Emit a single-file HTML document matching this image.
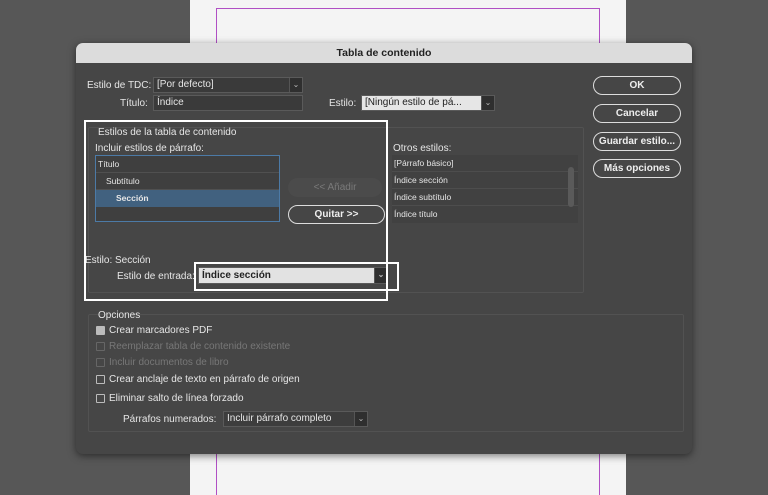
<!DOCTYPE html><html><head><meta charset="utf-8"><style>
*{box-sizing:border-box;margin:0;padding:0}
body{width:768px;height:495px;background:#575757;position:relative;overflow:hidden;font-family:"Liberation Sans",sans-serif;font-size:10px;color:#e6e6e6}
.a{position:absolute}
.page{left:190px;top:0;width:436px;height:495px;background:#f4f4f4}
.dlg{left:76px;top:43px;width:616px;height:411px;background:#464646;border-radius:7px;overflow:hidden;box-shadow:0 2px 8px rgba(0,0,0,.5)}
.tb{left:0;top:0;width:616px;height:20px;background:#dcdcdc;color:#222;font-weight:bold;text-align:center;line-height:20px;font-size:10.5px}
.fld{background:#3a3a3a;border:1px solid #5a5a5a;line-height:14px;height:16px;padding-left:3px}
.dd{background:#2f2f2f;border-left:1px solid #555;width:13px;height:14px;top:0;right:0;color:#bbb;font-size:8px;text-align:center;line-height:14px}
.btn{border:1.5px solid #ddd;border-radius:10px;text-align:center;color:#eee;font-weight:bold;height:19px;line-height:17px}
.grp{border:1px solid #525252;border-radius:2px}
.cb{width:9px;height:9px;border:1px solid #bbb;border-radius:1px}
.wb{border:2px solid #fff}
</style></head><body>
<div class="a page"></div>
<div class="a" style="left:216px;top:8px;width:384px;height:1px;background:#b04fc4"></div>
<div class="a" style="left:216px;top:8px;width:1px;height:40px;background:#b04fc4"></div>
<div class="a" style="left:599px;top:8px;width:1px;height:40px;background:#b04fc4"></div>
<div class="a" style="left:216px;top:450px;width:1px;height:45px;background:#b04fc4"></div>
<div class="a" style="left:599px;top:450px;width:1px;height:45px;background:#b04fc4"></div>
<div class="a dlg">
<div class="a tb">Tabla de contenido</div>
<div class="a" style="left:11px;top:37px">Estilo de TDC:</div>
<div class="a fld" style="left:77px;top:34px;width:150px">[Por defecto]<div class="a dd">⌄</div></div>
<div class="a" style="left:44px;top:55px">Título:</div>
<div class="a fld" style="left:77px;top:52px;width:150px">Índice</div>
<div class="a" style="left:253px;top:55px">Estilo:</div>
<div class="a fld" style="left:285px;top:52px;width:134px;background:#e6e6e6;color:#222">[Ningún estilo de pá...<div class="a dd">⌄</div></div>
<div class="a grp" style="left:12px;top:84px;width:496px;height:166px"></div>
<div class="a" style="left:22px;top:84px">Estilos de la tabla de contenido</div>
<div class="a" style="left:19px;top:100px">Incluir estilos de párrafo:</div>
<div class="a" style="left:19px;top:112px;width:185px;height:67px;border:1px solid #4c7aa6;background:#3f3f3f;font-size:8.5px">
<div style="height:17px;line-height:16px;padding-left:2px;border-bottom:1px solid #505050">Título</div>
<div style="height:17px;line-height:16px;padding-left:10px;border-bottom:1px solid #505050">Subtítulo</div>
<div style="height:17px;line-height:16px;padding-left:20px;background:#41617f;font-weight:bold">Sección</div></div>
<div class="a" style="left:212px;top:135px;width:94px;height:19px;background:#4b4b4b;border-radius:10px;color:#7a7a7a;text-align:center;line-height:19px">&lt;&lt; Añadir</div>
<div class="a btn" style="left:212px;top:162px;width:97px">Quitar &gt;&gt;</div>
<div class="a" style="left:317px;top:100px">Otros estilos:</div>
<div class="a" style="left:316px;top:112px;width:186px;height:68px;background:#414141;font-size:8.5px">
<div style="height:17px;line-height:16px;padding-left:2px;border-bottom:1px solid #4d4d4d">[Párrafo básico]</div>
<div style="height:17px;line-height:16px;padding-left:2px;border-bottom:1px solid #4d4d4d">Índice sección</div>
<div style="height:17px;line-height:16px;padding-left:2px;border-bottom:1px solid #4d4d4d">Índice subtítulo</div>
<div style="height:17px;line-height:16px;padding-left:2px">Índice título</div>
<div class="a" style="right:4px;top:12px;width:6px;height:40px;background:#5a5a5a;border-radius:3px"></div></div>
<div class="a" style="left:9px;top:212px">Estilo: Sección</div>
<div class="a" style="left:41px;top:228px">Estilo de entrada:</div>
<div class="a fld" style="left:122px;top:224px;width:190px;height:17px;background:#e2e2e2;color:#222;font-weight:bold;line-height:15px">Índice sección<div class="a dd" style="height:15px">⌄</div></div>
<div class="a wb" style="left:8px;top:77px;width:304px;height:181px"></div>
<div class="a wb" style="left:118px;top:219px;width:205px;height:29px"></div>
<div class="a grp" style="left:12px;top:271px;width:596px;height:118px"></div>
<div class="a" style="left:22px;top:267px">Opciones</div>
<div class="a cb" style="left:20px;top:283px;background:#bbb"></div><div class="a" style="left:33px;top:282px">Crear marcadores PDF</div>
<div class="a cb" style="left:20px;top:299px;border-color:#666"></div><div class="a" style="left:33px;top:298px;color:#777">Reemplazar tabla de contenido existente</div>
<div class="a cb" style="left:20px;top:315px;border-color:#666"></div><div class="a" style="left:33px;top:314px;color:#777">Incluir documentos de libro</div>
<div class="a cb" style="left:20px;top:332px"></div><div class="a" style="left:33px;top:331px">Crear anclaje de texto en párrafo de origen</div>
<div class="a cb" style="left:20px;top:351px"></div><div class="a" style="left:33px;top:350px">Eliminar salto de línea forzado</div>
<div class="a" style="left:47px;top:371px">Párrafos numerados:</div>
<div class="a fld" style="left:147px;top:368px;width:145px;background:#3d3d3d">Incluir párrafo completo<div class="a dd">⌄</div></div>
<div class="a btn" style="left:517px;top:33px;width:88px">OK</div>
<div class="a btn" style="left:517px;top:61px;width:88px">Cancelar</div>
<div class="a btn" style="left:517px;top:89px;width:88px">Guardar estilo...</div>
<div class="a btn" style="left:517px;top:116px;width:88px">Más opciones</div>
</div>
</body></html>
